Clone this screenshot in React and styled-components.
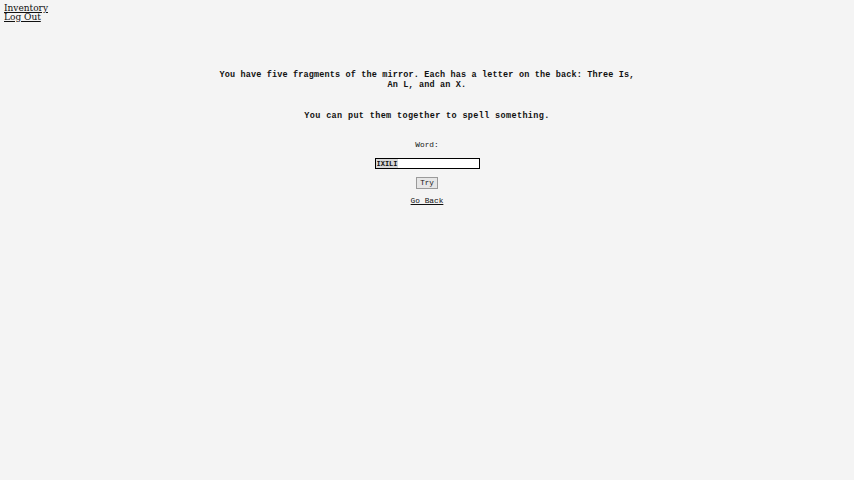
import React from "react";
import styled, { createGlobalStyle } from "styled-components";

const Global = createGlobalStyle`
  html, body { margin: 0; padding: 0; background: #f4f4f4; }
  body { font-family: "Liberation Serif", serif; color: #111; }
`;

const Nav = styled.nav`
  display: flex;
  flex-direction: column;
  padding: 4px 0 0 4px;
  font-family: "DejaVu Serif", serif;
  font-size: 9px;
  line-height: 9px;
`;

const NavLink = styled.a`
  color: #111;
  text-decoration: underline;
  width: max-content;
`;

const Main = styled.main`
  display: flex;
  flex-direction: column;
  align-items: center;
  text-align: center;
  font-family: "Liberation Mono", monospace;
  padding-top: 48px;
`;

const Lead = styled.p`
  margin: 0;
  max-width: 425px;
  font-weight: bold;
  font-size: 8.5px;
  letter-spacing: 0.15px;
  line-height: 10px;
`;

const Spaced = styled(Lead)`
  margin-top: 21px;
  letter-spacing: 0.35px;
`;

const Label = styled.label`
  margin-top: 19px;
  font-size: 7.8px;
  line-height: 10px;
`;

const Input = styled.input`
  margin-top: 8px;
  width: 105px;
  height: 11px;
  box-sizing: border-box;
  border: 1px solid #000;
  padding: 0 1px;
  font-family: "Liberation Mono", monospace;
  font-weight: bold;
  font-size: 7px;
  color: #111;
  background: linear-gradient(to right, #d8d8d8 22px, #fff 22px);
  outline: none;
`;

const Button = styled.button`
  margin-top: 8px;
  width: 22px;
  height: 12px;
  padding: 0;
  box-sizing: border-box;
  border: 1px solid #9a9a9a;
  background: #e6e6e6;
  font-family: "Liberation Mono", monospace;
  font-size: 7.6px;
  color: #111;
`;

const Back = styled.a`
  margin-top: 7px;
  font-size: 7.8px;
  line-height: 10px;
  color: #111;
  text-decoration: underline;
`;

export default function App() {
  return (
    <>
      <Global />
      <Nav>
        <NavLink href="#">Inventory</NavLink>
        <NavLink href="#">Log Out</NavLink>
      </Nav>
      <Main>
        <Lead>
          You have five fragments of the mirror. Each has a letter on the back: Three Is,
          An L, and an X.
        </Lead>
        <Spaced>You can put them together to spell something.</Spaced>
        <Label htmlFor="w">Word:</Label>
        <Input id="w" defaultValue="IXILI" />
        <Button>Try</Button>
        <Back href="#">Go Back</Back>
      </Main>
    </>
  );
}
